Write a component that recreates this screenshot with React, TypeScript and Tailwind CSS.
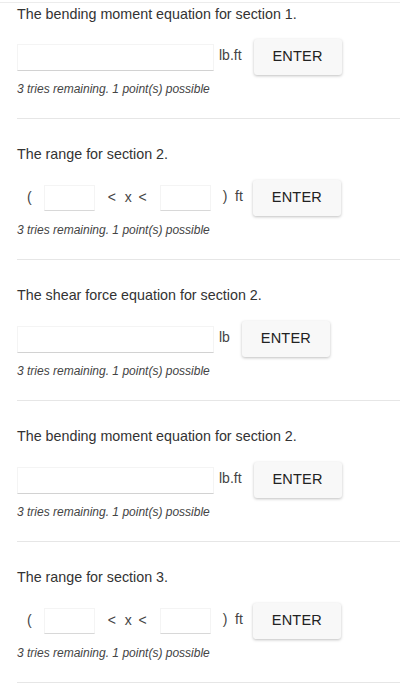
import React from 'react';

type Row =
  | { kind: 'eq'; unit: string }
  | { kind: 'range' };

interface Question {
  title: string;
  row: Row;
}

const questions: Question[] = [
  { title: 'The bending moment equation for section 1.', row: { kind: 'eq', unit: 'lb.ft' } },
  { title: 'The range for section 2.', row: { kind: 'range' } },
  { title: 'The shear force equation for section 2.', row: { kind: 'eq', unit: 'lb' } },
  { title: 'The bending moment equation for section 2.', row: { kind: 'eq', unit: 'lb.ft' } },
  { title: 'The range for section 3.', row: { kind: 'range' } },
];

const EnterButton = ({ className = '' }: { className?: string }) => (
  <button
    className={`h-[36px] w-[88px] rounded-[3px] bg-[#f8f8f8] text-[14.5px] font-medium tracking-[0.2px] text-[#222] shadow-[0_1px_3px_rgba(0,0,0,0.25)] ${className}`}
  >
    ENTER
  </button>
);

const QuestionBlock = ({ q, first }: { q: Question; first: boolean }) => (
  <div className={`border-b border-[#e6e6e6] pb-[21px] ${first ? 'pt-[1px]' : 'pt-[25px]'}`}>
    <div className="h-[20px] text-[14.3px] leading-[20px] text-[#333]">{q.title}</div>

    {q.row.kind === 'eq' ? (
      <div className={`flex h-[36px] items-center ${first ? 'mt-[15px]' : 'mt-[16px]'}`}>
        <input className="h-[27px] w-[197px] border border-[#f4f4f4] border-b-[#d2d2d2] bg-white outline-none" />
        <span className="ml-[5px] -mt-[4px] text-[14px] text-[#444]">{q.row.unit}</span>
        <EnterButton className="ml-[12px]" />
      </div>
    ) : (
      <div className="mt-[16px] flex h-[36px] items-center text-[14px] text-[#444]">
        <span className="ml-[10px] -mt-[2px]">(</span>
        <input className="ml-[12px] h-[26px] w-[51px] border border-[#f4f4f4] border-b-[#d8d8d8] bg-white outline-none" />
        <span className="ml-[13px] -mt-[2px] flex w-[39px] justify-between">
          <span>&lt;</span>
          <span className="ml-[2px]">x</span>
          <span>&lt;</span>
        </span>
        <input className="ml-[13px] h-[26px] w-[51px] border border-[#f4f4f4] border-b-[#d8d8d8] bg-white outline-none" />
        <span className="ml-[12px] -mt-[4px] whitespace-pre">{')  ft'}</span>
        <EnterButton className="ml-[10px]" />
      </div>
    )}

    <div className="mt-[6px] h-[16px] text-[12px] italic leading-[16px] text-[#444]">
      3 tries remaining. 1 point(s) possible
    </div>
  </div>
);

export default function App() {
  return (
    <div
      className="min-h-[692px] w-[400px] overflow-hidden bg-white"
      style={{ fontFamily: '"Liberation Sans", Arial, sans-serif' }}
    >
      <div className="h-[3px] border-b border-[#ececec]" />
      <div className="pl-[17px]">
        {questions.map((q, i) => (
          <QuestionBlock key={i} q={q} first={i === 0} />
        ))}
      </div>
    </div>
  );
}
